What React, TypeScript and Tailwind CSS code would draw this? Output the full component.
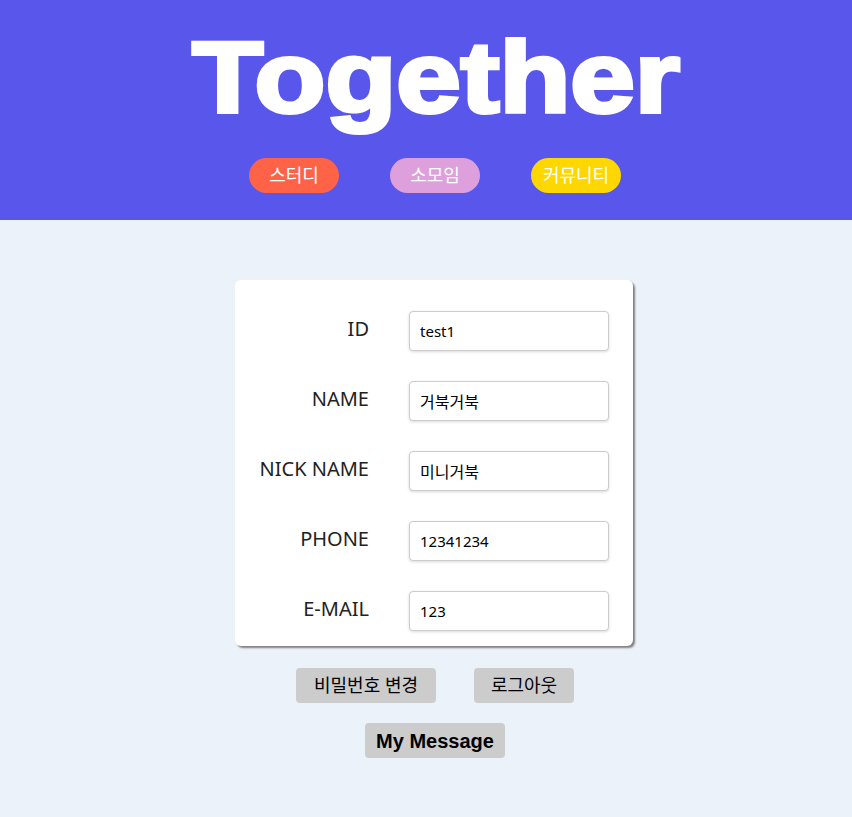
import React from "react";

const rows = [
  { label: "ID", value: "test1", ko: false },
  { label: "NAME", value: "거북거북", ko: true },
  { label: "NICK NAME", value: "미니거북", ko: true },
  { label: "PHONE", value: "12341234", ko: false },
  { label: "E-MAIL", value: "123", ko: false },
];

const kr = "font-['Noto_Sans','Noto_Sans_CJK_KR',sans-serif]";

export default function App() {
  return (
    <div className="min-h-[817px] bg-[#EBF2FA]">
      <header className="h-[220px] bg-[#5856EB] flex flex-col items-center pl-[20px]">
        <div className="mt-[27px] h-[100px] leading-none text-[100px] font-bold text-white font-['Liberation_Sans',Arial,sans-serif] scale-x-[1.16] [-webkit-text-stroke:4px_white]">
          Together
        </div>
        <div className="mt-[31px] flex gap-[51px] -ml-[2px]">
          <div className={`w-[90px] h-[35px] rounded-full bg-[#FF6347] text-white text-[18px] flex items-center justify-center ${kr}`}>스터디</div>
          <div className={`w-[90px] h-[35px] rounded-full bg-[#DDA0DD] text-white text-[18px] flex items-center justify-center ${kr}`}>소모임</div>
          <div className={`w-[90px] h-[35px] rounded-full bg-[#FFD700] text-white text-[18px] flex items-center justify-center ${kr}`}>커뮤니티</div>
        </div>
      </header>
      <main className="flex flex-col items-center pl-[16px] pt-[60px]">
        <div className="w-[398px] bg-white rounded-[6px] shadow-[2px_2px_2px_#808080] pt-[31px] pb-[15px] flex flex-col gap-[30px]">
          {rows.map((r) => (
            <div key={r.label} className="flex items-start h-[40px]">
              <div className={`w-[134px] text-right mt-[4px] text-[20px] leading-[27px] text-[#222] ${kr}`}>{r.label}</div>
              <input
                readOnly
                value={r.value}
                className={`ml-[40px] w-[200px] h-[40px] border border-[#ccc] rounded-[4px] px-[10px] ${r.ko ? "text-[16px]" : "text-[15px]"} text-black bg-white shadow-[0_1px_3px_rgba(0,0,0,0.15)] outline-none ${kr}`}
              />
            </div>
          ))}
        </div>
        <div className="mt-[22px] flex gap-[38px] ml-[2px]">
          <button className={`w-[140px] h-[35px] rounded-[4px] bg-[#CCCCCC] text-black text-[18px] ${kr}`}>비밀번호 변경</button>
          <button className={`w-[100px] h-[35px] rounded-[4px] bg-[#CCCCCC] text-black text-[18px] ${kr}`}>로그아웃</button>
        </div>
        <button className="mt-[20px] ml-[2px] w-[140px] h-[35px] rounded-[4px] bg-[#CCCCCC] text-black text-[20px] font-bold font-['Liberation_Sans',Arial,sans-serif]">
          My Message
        </button>
      </main>
    </div>
  );
}
